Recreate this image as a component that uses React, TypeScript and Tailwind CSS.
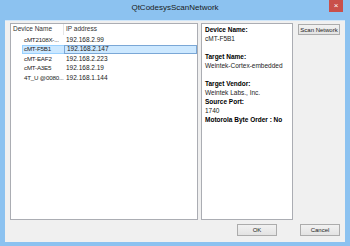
import React from 'react';

const devices = [
  { name: 'cMT2108X-...', ip: '192.168.2.99' },
  { name: 'cMT-F5B1', ip: '192.168.2.147', selected: true },
  { name: 'cMT-EAF2', ip: '192.168.2.223' },
  { name: 'cMT-A3E5', ip: '192.168.2.19' },
  { name: '4T_U @0080...', ip: '192.168.1.144' },
];

const font = { fontFamily: '"Liberation Sans", Arial, sans-serif' };

const Btn: React.FC<{ label: string; className?: string }> = ({ label, className }) => (
  <button
    className={`flex items-center justify-center border border-[#acacac] bg-gradient-to-b from-[#f2f2f2] to-[#e3e3e3] text-[6px] text-[#222] leading-none ${className ?? ''}`}
  >
    {label}
  </button>
);

const App: React.FC = () => {
  return (
    <div style={font} className="w-[350px] h-[246px] bg-[#8cc2f0] flex flex-col overflow-hidden">
      {/* Title bar */}
      <div className="relative h-[20px] shrink-0 flex items-center justify-center">
        <span className="text-[8px] text-[#1a1a1a] -mt-[5px]">QtCodesysScanNetwork</span>
        <div className="absolute right-[7px] top-0 w-[14px] h-[12px] bg-[#c9504a] flex items-center justify-center text-white text-[8px] leading-none">
          ×
        </div>
      </div>

      {/* Client area */}
      <div className="flex-1 mx-[5px] mb-[4px] bg-[#f0f0f0] border-t border-[#cfe6fa] flex flex-col px-[5px] pt-[2px]">
        <div className="flex h-[197px]">
          {/* Device list */}
          <div className="w-[188px] border border-[#abadb3] bg-white flex flex-col whitespace-nowrap">
            <div className="h-[11px] flex text-[6.5px] text-[#333] leading-none">
              <div className="w-[53px] pl-[2px] flex items-center border-r border-[#e5e5e5]">Device Name</div>
              <div className="flex-1 pl-[2px] flex items-center">IP address</div>
            </div>
            {devices.map((d) => (
              <div key={d.name} className="h-[9.5px] flex pl-[11px] text-[6.5px] text-[#222] leading-none">
                <div
                  className={`flex-1 flex ${d.selected ? 'bg-[#cce8ff] border-y border-l border-[#99d1ff]' : 'border-y border-l border-transparent'}`}
                >
                  <div className="w-[41px] pl-[1px] flex items-center text-[6.2px] tracking-[-0.2px]">{d.name}</div>
                  <div
                    className={`flex-1 pl-[2px] flex items-center ${d.selected ? 'border border-[#7aa7d6] -my-[1px]' : ''}`}
                  >
                    {d.ip}
                  </div>
                </div>
              </div>
            ))}
          </div>

          {/* Details */}
          <div className="ml-[3px] w-[92px] border border-[#abadb3] bg-white px-[3px] pt-[0.5px] text-[6.5px] leading-[9.1px] text-[#222] whitespace-nowrap">
            <div className="font-bold text-black">Device Name:</div>
            <div>cMT-F5B1</div>
            <div>&nbsp;</div>
            <div className="font-bold text-black">Target Name:</div>
            <div>Weintek-Cortex-embedded</div>
            <div>&nbsp;</div>
            <div className="font-bold text-black">Target Vendor:</div>
            <div>Weintek Labs., Inc.</div>
            <div className="font-bold text-black">Source Port:</div>
            <div>1740</div>
            <div className="font-bold text-black">Motorola Byte Order : No</div>
          </div>

          {/* Side buttons */}
          <div className="ml-[5px] flex flex-col pt-[1px]">
            <Btn label="Scan Network" className="w-[42px] h-[11px]" />
          </div>
        </div>

        {/* Bottom buttons */}
        <div className="flex justify-end gap-[23px] mt-[4px]">
          <Btn label="OK" className="w-[40px] h-[12px]" />
          <Btn label="Cancel" className="w-[40px] h-[12px]" />
        </div>
      </div>
    </div>
  );
};

export default App;
